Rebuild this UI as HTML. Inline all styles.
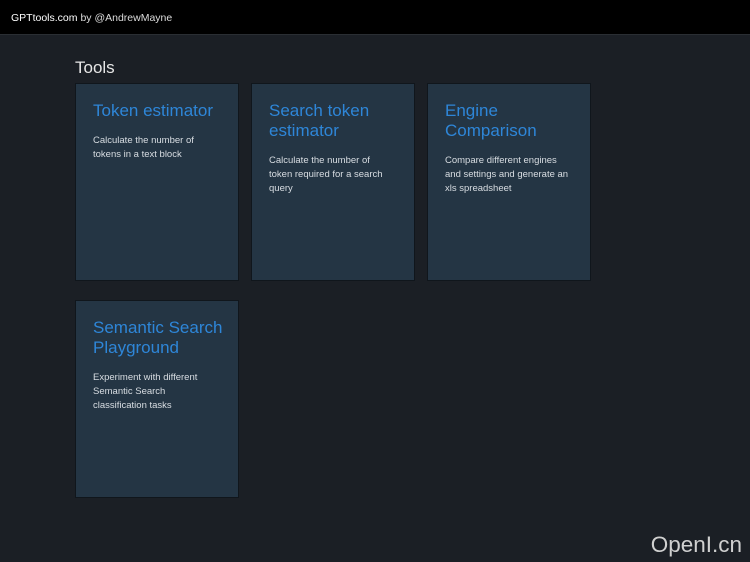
<!DOCTYPE html><html><head><style>
body{margin:0;width:750px;height:562px;background:#1b1f25;font-family:"Liberation Sans",sans-serif;overflow:hidden;position:relative}
.hd{height:35px;background:#000;border-bottom:1px solid #2a2e33;box-sizing:border-box;color:#ddd;font-size:10.5px;line-height:36px;padding-left:11px}
.hd b{font-weight:normal;color:#fff}
h1{position:absolute;left:75px;top:58px;margin:0;font-weight:normal;font-size:17px;color:#e6e6e6}
.c{position:absolute;width:164px;height:198px;background:#243544;border:1px solid #10161c;box-sizing:border-box;padding:17px 19px 17px 17px}
.c h2{margin:0;font-weight:normal;font-size:17px;line-height:20px;color:#2e86d8}
.c p{margin:13px 0 0;font-size:9.5px;line-height:14px;color:#d8dde2;width:124px}
.w{position:absolute;right:8px;bottom:4px;color:#d0d0d0;font-size:22.5px}
</style></head><body>
<div class="hd"><b>GPTtools.com</b> by @AndrewMayne</div>
<h1>Tools</h1>
<div class="c" style="left:75px;top:83px"><h2>Token estimator</h2><p>Calculate the number of tokens in a text block</p></div>
<div class="c" style="left:251px;top:83px"><h2>Search token estimator</h2><p>Calculate the number of token required for a search query</p></div>
<div class="c" style="left:427px;top:83px"><h2>Engine Comparison</h2><p>Compare different engines and settings and generate an xls spreadsheet</p></div>
<div class="c" style="left:75px;top:300px"><h2><span style="white-space:nowrap">Semantic Search</span> Playground</h2><p>Experiment with different Semantic Search classification tasks</p></div>
<div class="w">OpenI.cn</div>
</body></html>
